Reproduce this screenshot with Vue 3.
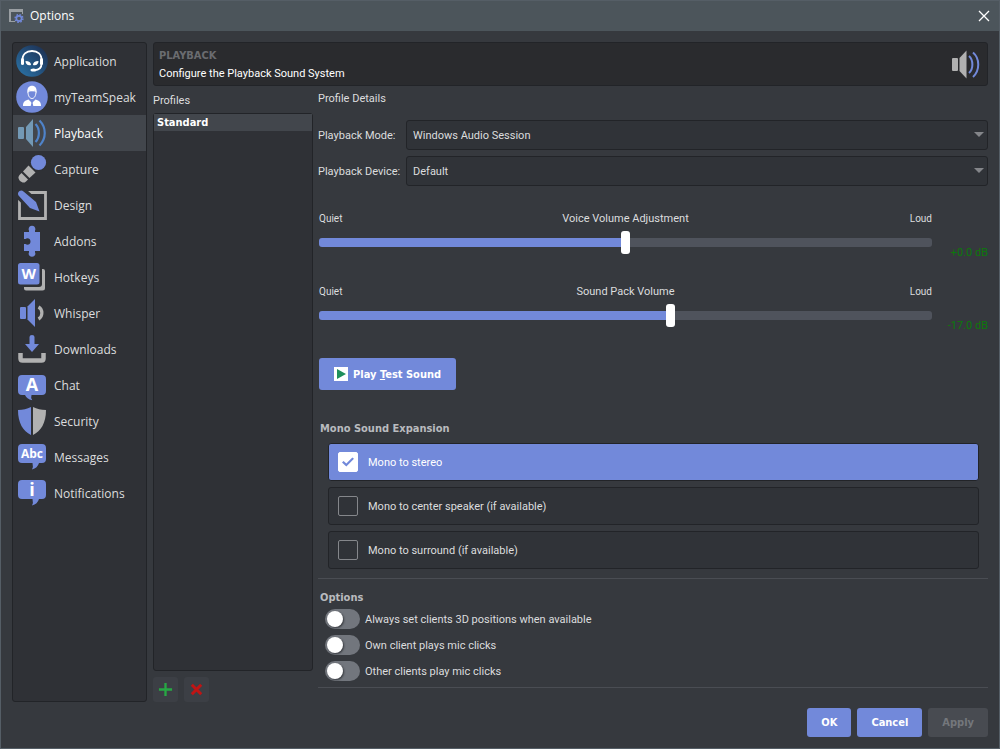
<script setup>
import {computed, reactive, ref} from 'vue';

const pages = [
  'Application', 'myTeamSpeak', 'Playback', 'Capture', 'Design', 'Addons', 'Hotkeys',
  'Whisper', 'Downloads', 'Chat', 'Security', 'Messages', 'Notifications'
];
const activePage = ref('Playback');

const profiles = ref(['Standard']);
const activeProfile = ref('Standard');

const playbackMode = ref('Windows Audio Session');
const playbackDevice = ref('Default');

const sliders = reactive([
  {id: 'voice', label: 'Voice Volume Adjustment', min: -30, max: 30, value: 0},
  {id: 'pack', label: 'Sound Pack Volume', min: -40, max: 0, value: -17}
]);

const expansions = reactive([
  {id: 'stereo', text: 'Mono to stereo', checked: true},
  {id: 'center', text: 'Mono to center speaker (if available)', checked: false},
  {id: 'surround', text: 'Mono to surround (if available)', checked: false}
]);

const switches = reactive([
  {id: 'positions', text: 'Always set clients 3D positions when available', checked: false},
  {id: 'own', text: 'Own client plays mic clicks', checked: false},
  {id: 'other', text: 'Other clients play mic clicks', checked: false}
]);

const changed = ref(false);
const applyDisabled = computed(() => !changed.value);

const fillWidth = (s) => ((s.value - s.min) / (s.max - s.min)) * 100 + '%';

const decibel = (s) => (s.value >= 0 ? '+' : '') + Number(s.value).toFixed(1) + ' dB';

const addProfile = () => {
  profiles.value.push('Profile ' + (profiles.value.length + 1));
};

const removeProfile = () => {
  profiles.value = profiles.value.filter((p) => p !== activeProfile.value);
};
</script>

<template>
  <div class="window">
    <header class="titlebar">
      <svg class="titlebar-icon" viewBox="0 0 16 16">
        <path d="M1 1h14v5h-1V4H3v9h4v1H1z" fill="#9a9fa3" />
        <circle cx="11" cy="10.5" r="2.6" fill="none" stroke="#7289da" stroke-width="1.6" />
        <circle cx="11" cy="10.5" r="3.9" fill="none" stroke="#7289da" stroke-width="1.4" stroke-dasharray="1.6 1.46" />
      </svg>
      <h1 class="titlebar-text">Options</h1>
      <button class="close" type="button" aria-label="Close">
        <svg viewBox="0 0 12 12"><path d="M1 1l10 10M11 1L1 11" stroke="#fff" stroke-width="1.3" /></svg>
      </button>
    </header>

    <div class="content">
      <nav class="pages">
        <a
            v-for="page in pages"
            :key="page"
            href="#"
            class="page"
            :class="{ 'active': page === activePage }"
            @click.prevent="activePage = page"
        >
          <svg class="page-icon" viewBox="0 0 32 32">
            <template v-if="page === 'Application'">
              <defs>
                <linearGradient id="ts" x1="0" y1="1" x2="1" y2="0">
                  <stop offset="0" stop-color="#2c77ab" />
                  <stop offset="0.5" stop-color="#23507c" />
                  <stop offset="1" stop-color="#1c2a4a" />
                </linearGradient>
              </defs>
              <circle cx="16" cy="16" r="15.8" fill="url(#ts)" />
              <path d="M6.5 16C6 9 10.5 6 16 6s10 3 9.5 10" fill="none" stroke="#fff" stroke-width="1.8" />
              <rect x="5" y="13" width="3" height="7" rx="1.5" fill="#fff" />
              <rect x="24" y="13" width="3" height="7" rx="1.5" fill="#fff" />
              <path d="M9.5 16c3.5 0 5.5 1.5 5.5 4-3.5.8-5.5-1-5.5-4zM22.5 16c-3.5 0-5.5 1.5-5.5 4 3.5.8 5.500-1 5.5-4z" fill="#fff" />
              <path d="M25.5 19c0 4-2.5 6-7 6.2" fill="none" stroke="#fff" stroke-width="1.8" />
              <ellipse cx="17.5" cy="25" rx="3" ry="1.5" fill="#fff" />
            </template>
            <template v-else-if="page === 'myTeamSpeak'">
              <circle cx="16" cy="16" r="15.8" fill="#7289da" />
              <path d="M12 11c0-1.5 7-1.5 8-.5 0 4-1.6 7-4 7s-4-3-4-6.5z" fill="#7289da" stroke="#fff" stroke-width="1" />
              <path d="M11.5 12c-.8-5 1.5-7.2 4.5-7.2s5.3 2.2 4.5 7.2L19 9.5c-2 1-4 .5-6 0z" fill="#fff" />
              <path d="M7 25c0-4 1.5-5.5 5.5-6.5L16 22l3.5-3.5c4 1 5.5 2.5 5.5 6.5z" fill="#fff" />
              <path d="M15 20h2l-.5 1.5.8 3.5h-2.6l.8-3.5z" fill="#7289da" />
            </template>
            <template v-else-if="page === 'Playback'">
              <rect x="2" y="10" width="6" height="12" rx="1" fill="#7399b5" />
              <path d="M10 10l7-8v28l-7-8z" fill="#7399b5" />
              <path d="M19.5 7c4.5 4.5 4.5 13.5 0 18M23.500 3.5c7 7 7 18 0 25" fill="none" stroke="#4f83c9" stroke-width="2.2" />
            </template>
            <template v-else-if="page === 'Capture'">
              <path d="M12.5 12.5l7 7L13.500 25 7 18.500z" fill="#b1b1b1" />
              <path d="M5.500 20l6.500 6.500-2 2c-1 1-1.500 1-2.500 1-2.500 0-5-2.500-5-5 0-1 .3-1.700 1-2.500z" fill="#b1b1b1" />
              <circle cx="22.5" cy="9.5" r="8.400" fill="#2f3136" />
              <circle cx="22.5" cy="9.5" r="7.6" fill="#7289da" />
            </template>
            <template v-else-if="page === 'Design'">
              <path d="M3.5 3.5h26v26h-26z" fill="none" stroke="#b1b1b1" stroke-width="2.8" />
              <path d="M0 0h10l14 13 1 11-12-3L0 9z" fill="#2f3136" />
              <path d="M2.5 6.5c-1-1.5-.5-3.5 1-4.5s3-.5 4 .5L20 13l3.500 9.5L14 19z" fill="#7289da" />
            </template>
            <template v-else-if="page === 'Addons'">
              <path d="M8 7h5V5.500C12 4 13 .8 16 .8s4 3.200 3 4.700V7h5v19h-5v1.500c1 1.500 0 4.200-3 4.200s-4-2.700-3-4.200V26H8v-7h1.500c1.500 1.500 5 1 5-2.500s-3.500-4-5-2.500H8z" fill="#7289da" />
            </template>
            <template v-else-if="page === 'Hotkeys'">
              <path d="M26 8h1q2 0 2 2v17q0 2.500-2.500 2.500H10q-2 0-2-2V26h15q3 0 3-3z" fill="#b1b1b1" />
              <rect x="2" y="2" width="21.5" height="21.5" rx="2.5" fill="#7289da" />
              <text x="12.7" y="18" class="glyph" font-size="15">W</text>
            </template>
            <template v-else-if="page === 'Whisper'">
              <rect x="4" y="10" width="6" height="12" rx="1" fill="#7289da" />
              <path d="M11.5 9.500L19 2v28l-7.500-7.500z" fill="#7289da" />
              <path d="M22.5 10c4.500 2.500 4.500 9.500 0 12" fill="none" stroke="#b1b1b1" stroke-width="3.2" />
            </template>
            <template v-else-if="page === 'Downloads'">
              <path d="M13.5 4q0-2 2.500-2t2.500 2v7H23l-7 8-7-8h4.500z" fill="#7289da" />
              <path d="M4.5 20v5.500q0 2 2 2h19q2 0 2-2V20" fill="none" stroke="#b1b1b1" stroke-width="4.5" />
            </template>
            <template v-else-if="page === 'Chat'">
              <path d="M6 6h20q4 0 4 4v12q0 4-4 4H15.500q-1 3 .8 5.200Q10.500 30 9 26H6q-4 0-4-4V10q0-4 4-4z" fill="#7289da" />
              <text x="16" y="22" class="glyph" font-size="18">A</text>
            </template>
            <template v-else-if="page === 'Security'">
              <path d="M15 2v28C7 26 2 18 2 5 7 5 11 4 15 2z" fill="#7289da" />
              <path d="M17 2v28C25 26 30 18 30 5 25 5 21 4 17 2z" fill="#b1b1b1" />
            </template>
            <template v-else-if="page === 'Messages'">
              <path d="M6 3h20q4 0 4 4v11q0 4-4 4h-3q-1.500 5-7 6.500 1.500-2.500.5-6.500H6q-4 0-4-4V7q0-4 4-4z" fill="#7289da" />
              <text x="16" y="17" class="glyph" font-size="12">Abc</text>
            </template>
            <template v-else>
              <path d="M6 3h20q4 0 4 4v11q0 4-4 4h-3q-1.500 5-7 6.500 1.500-2.500.5-6.500H6q-4 0-4-4V7q0-4 4-4z" fill="#7289da" />
              <text x="16" y="19" class="glyph" font-size="18">i</text>
            </template>
          </svg>
          <span class="page-name">{{ page }}</span>
        </a>
      </nav>

      <main class="panel">
        <div class="banner">
          <div class="banner-text">
            <h2 class="banner-title">PLAYBACK</h2>
            <p>Configure the Playback Sound System</p>
          </div>
          <svg class="banner-icon" viewBox="0 0 32 32">
            <rect x="2" y="10" width="6" height="13" rx="1" fill="#b1b1b1" />
            <path d="M9.5 10l7-7.500v28l-7-7.500z" fill="#b1b1b1" />
            <path d="M19 8c4.500 4 4.500 13 0 17M23 4.500c7 6 7 18 0 24.500" fill="none" stroke="#7289da" stroke-width="2" />
          </svg>
        </div>

        <div class="columns">
          <section class="profiles">
            <h3 class="caption">Profiles</h3>
            <div class="profile-list">
              <button
                  v-for="profile in profiles"
                  :key="profile"
                  type="button"
                  class="profile"
                  :class="{ 'active': profile === activeProfile }"
                  @click="activeProfile = profile"
              >
                {{ profile }}
              </button>
            </div>
            <div class="profile-tools">
              <button class="tool" type="button" aria-label="Add profile" @click="addProfile">
                <svg viewBox="0 0 16 16"><path d="M8 1v14M1 8h14" stroke="#27a844" stroke-width="2.5" /></svg>
              </button>
              <button class="tool" type="button" aria-label="Remove profile" @click="removeProfile">
                <svg viewBox="0 0 16 16"><path d="M3 3l10 10M13 3L3 13" stroke="#c01414" stroke-width="3.2" /></svg>
              </button>
            </div>
          </section>

          <section class="details">
            <h3 class="caption">Profile Details</h3>

            <div class="fields">
              <label for="mode">Playback Mode:</label>
              <div class="select">
                <select id="mode" v-model="playbackMode">
                  <option>Windows Audio Session</option>
                  <option>Direct Sound</option>
                </select>
              </div>
              <label for="device">Playback Device:</label>
              <div class="select">
                <select id="device" v-model="playbackDevice">
                  <option>Default</option>
                </select>
              </div>
            </div>

            <div v-for="s in sliders" :key="s.id" class="volume">
              <div class="volume-main">
                <div class="volume-labels">
                  <span class="small">Quiet</span>
                  <label :for="s.id">{{ s.label }}</label>
                  <span class="small end">Loud</span>
                </div>
                <input
                    :id="s.id"
                    v-model="s.value"
                    class="slider"
                    type="range"
                    :min="s.min"
                    :max="s.max"
                    :style="{ '--fill': fillWidth(s) }"
                    @input="changed = true"
                />
              </div>
              <output class="decibel" :for="s.id">{{ decibel(s) }}</output>
            </div>

            <button class="btn test" type="button">
              <svg viewBox="0 0 14 14">
                <path d="M0 0h14v14H0z" fill="#fff" />
                <path d="M3 2l9 5-9 5z" fill="#1f8f5c" />
              </svg>
              <span>Play <u>T</u>est Sound</span>
            </button>

            <fieldset class="expansion">
              <legend>Mono Sound Expansion</legend>
              <label v-for="e in expansions" :key="e.id" class="choice" :class="{ 'checked': e.checked }">
                <input v-model="e.checked" type="checkbox" class="box" @change="changed = true" />
                <span class="option-text">{{ e.text }}</span>
              </label>
            </fieldset>

            <fieldset class="toggles">
              <legend>Options</legend>
              <label v-for="t in switches" :key="t.id" class="toggle">
                <input v-model="t.checked" type="checkbox" class="switch" @change="changed = true" />
                <span class="option-text">{{ t.text }}</span>
              </label>
            </fieldset>
          </section>
        </div>
      </main>
    </div>

    <footer class="footer">
      <button class="btn" type="button">OK</button>
      <button class="btn" type="button">Cancel</button>
      <button class="btn" type="button" :disabled="applyDisabled">Apply</button>
    </footer>
  </div>
</template>

<style>
body {
  margin: 0;
  background-color: #36393e;
}
</style>

<style scoped>
.window {
  --blue: #7289da;
  --edge: #222428;
  --bold: "DejaVu Sans Condensed", "Noto Sans", sans-serif;
  box-sizing: border-box;
  min-height: 100vh;
  display: flex;
  flex-direction: column;
  border: 1px solid #555e66;
  background-color: #36393e;
  color: #dcddde;
  font-family: Tahoma, Roboto, sans-serif;
  font-size: 11px;
  line-height: 14px;
}

.window *,
.window *::before {
  box-sizing: border-box;
}

h1, h2, h3, p {
  margin: 0;
  font-size: inherit;
  font-weight: normal;
}

button, select {
  font: inherit;
  color: inherit;
}

.titlebar {
  display: flex;
  align-items: center;
  gap: 6px;
  height: 30px;
  padding: 0 9px 0 7px;
  background-color: #4c555b;
}

.titlebar-icon {
  width: 16px;
  height: 16px;
}

.titlebar-text {
  flex: 1;
  color: #fff;
  font-family: "Segoe UI", "Open Sans", sans-serif;
  font-size: 12px;
}

.close {
  display: flex;
  padding: 0;
  border: 0;
  background: none;
}

.close svg {
  width: 12px;
  height: 12px;
}

.content {
  flex: 1;
  display: flex;
  gap: 6px;
  padding: 11px 11px 0;
}

.pages {
  flex: none;
  width: 135px;
  border: 1px solid var(--edge);
  border-radius: 3px;
  background-color: #2f3136;
  font-family: "Segoe UI", "Open Sans", sans-serif;
  font-size: 12px;
}

.page {
  display: flex;
  align-items: center;
  gap: 6px;
  height: 36px;
  padding-left: 3px;
  color: #dcddde;
  text-decoration: none;
}

.page.active {
  background-color: #42464c;
  color: #fff;
}

.page-icon {
  width: 32px;
  height: 32px;
}

.page-name {
  padding-top: 2px;
}

.glyph {
  fill: #fff;
  font-family: "Open Sans", sans-serif;
  font-weight: bold;
  text-anchor: middle;
}

.panel {
  flex: 1;
  min-width: 0;
  display: flex;
  flex-direction: column;
}

.banner {
  display: flex;
  align-items: center;
  justify-content: space-between;
  height: 44px;
  padding: 0 5px;
  border: 1px solid var(--edge);
  border-radius: 3px;
  background-color: #2a2b2e;
  color: #fff;
}

.banner-text {
  display: flex;
  flex-direction: column;
  gap: 4px;
  padding-top: 2px;
}

.banner-title {
  color: #6a6c70;
  font-family: var(--bold);
  font-weight: bold;
}

.banner-icon {
  width: 32px;
  height: 32px;
}

.columns {
  flex: 1;
  display: flex;
  gap: 5px;
}

.profiles {
  flex: none;
  width: 160px;
  display: flex;
  flex-direction: column;
  padding-top: 8px;
}

.profile-list {
  flex: 1;
  margin: 5px 0 6px;
  border: 1px solid var(--edge);
  border-radius: 3px;
  background-color: #2f3136;
}

.profile {
  display: block;
  width: 100%;
  height: 17px;
  padding: 1px 3px 0;
  border: 0;
  background: none;
  font-family: var(--bold);
  font-weight: bold;
  text-align: left;
}

.profile.active {
  background-color: #42464c;
  color: #fff;
}

.profile-tools {
  display: flex;
  gap: 6px;
}

.tool {
  display: flex;
  align-items: center;
  justify-content: center;
  width: 25px;
  height: 25px;
  padding: 0;
  border: 0;
  border-radius: 3px;
  background-color: #3c3f45;
}

.tool svg {
  width: 15px;
  height: 15px;
}

.details {
  flex: 1;
  min-width: 0;
  padding-top: 6px;
}

.fields {
  display: grid;
  grid-template-columns: 82px 1fr;
  align-items: center;
  gap: 6px;
  margin: 14px 0 26px;
  white-space: nowrap;
}

.fields label {
  padding-top: 2px;
}

.select {
  position: relative;
}

.select::after {
  content: "";
  position: absolute;
  right: 4px;
  top: 12px;
  border: 5px solid transparent;
  border-top-color: #84868a;
  border-bottom: 0;
  pointer-events: none;
}

select {
  display: block;
  width: 100%;
  height: 30px;
  padding: 2px 6px 0;
  appearance: none;
  border: 1px solid var(--edge);
  border-radius: 3px;
  background-color: #303338;
}

.volume {
  display: flex;
  gap: 6px;
  height: 73px;
}

.volume-main {
  flex: 1;
  padding-left: 1px;
}

.volume-labels {
  display: grid;
  grid-template-columns: 1fr auto 1fr;
  margin-bottom: 5px;
}

.small {
  font-size: 10px;
}

.end {
  text-align: right;
}

.slider {
  display: block;
  width: 100%;
  height: 23px;
  margin: 0;
  appearance: none;
  background: none;
}

.slider::-webkit-slider-runnable-track {
  height: 9px;
  border-radius: 3px;
  background: linear-gradient(var(--blue), var(--blue)) no-repeat #4f535c;
  background-size: var(--fill) 100%;
}

.slider::-webkit-slider-thumb {
  width: 9px;
  height: 23px;
  margin-top: -7px;
  appearance: none;
  border-radius: 3px;
  background-color: #fff;
}

.decibel {
  width: 50px;
  padding-top: 34px;
  color: #0b7a0b;
  text-align: right;
}

.btn {
  display: inline-flex;
  align-items: center;
  justify-content: center;
  height: 29px;
  padding: 1px 14px 0;
  border: 0;
  border-radius: 3px;
  background-color: var(--blue);
  color: #fff;
  font-family: var(--bold);
  font-weight: bold;
}

.btn:disabled {
  background-color: #484b51;
  color: #74777c;
}

.test {
  gap: 5px;
  height: 32px;
  margin-left: 1px;
  padding: 0 15px;
}

.test svg {
  width: 14px;
  height: 14px;
}

.test span {
  padding-top: 2px;
}

fieldset {
  margin: 0;
  min-width: 0;
  padding: 0;
  border: 0;
  border-bottom: 1px solid #4a4d53;
}

legend {
  padding: 1px 2px 0;
  color: #b9bbbe;
  font-family: var(--bold);
  font-weight: bold;
}

.expansion {
  margin-top: 31px;
  padding-bottom: 9px;
}

.expansion legend {
  margin-bottom: 7px;
}

.choice {
  display: flex;
  align-items: center;
  gap: 10px;
  height: 38px;
  margin: 0 9px 6px 10px;
  padding: 0 9px;
  border: 1px solid var(--edge);
  border-radius: 3px;
  background-color: #303338;
}

.choice:last-child {
  margin-bottom: 0;
}

.choice.checked {
  background-color: var(--blue);
  color: #fff;
}

.option-text {
  padding-top: 2px;
}

.box {
  flex: none;
  display: flex;
  align-items: center;
  justify-content: center;
  width: 20px;
  height: 20px;
  margin: 0;
  appearance: none;
  border: 1px solid #85878b;
  border-radius: 2px;
}

.box:checked {
  border-color: #fff;
  background-color: #fff;
}

.box:checked::before {
  content: "";
  width: 12px;
  height: 10px;
  background-color: var(--blue);
  clip-path: polygon(0 55%, 13% 40%, 36% 65%, 86% 4%, 100% 18%, 36% 96%);
}

.toggles {
  margin-top: 11px;
  padding-bottom: 6px;
}

.toggles legend {
  margin-bottom: 4px;
}

.toggle {
  display: flex;
  align-items: center;
  gap: 5px;
  height: 20px;
  margin: 0 0 6px 7px;
}

.toggle:last-child {
  margin-bottom: 0;
}

.switch {
  flex: none;
  width: 35px;
  height: 20px;
  margin: 0;
  padding: 2px;
  appearance: none;
  border-radius: 10px;
  background-color: #72767d;
}

.switch::before {
  content: "";
  display: block;
  width: 16px;
  height: 16px;
  border-radius: 50%;
  background-color: #fff;
  box-shadow: 1px 1px 2px #36393e;
}

.switch:checked {
  background-color: var(--blue);
}

.switch:checked::before {
  margin-left: auto;
}

.footer {
  display: flex;
  justify-content: flex-end;
  gap: 6px;
  padding: 6px 11px 11px;
}
</style>
